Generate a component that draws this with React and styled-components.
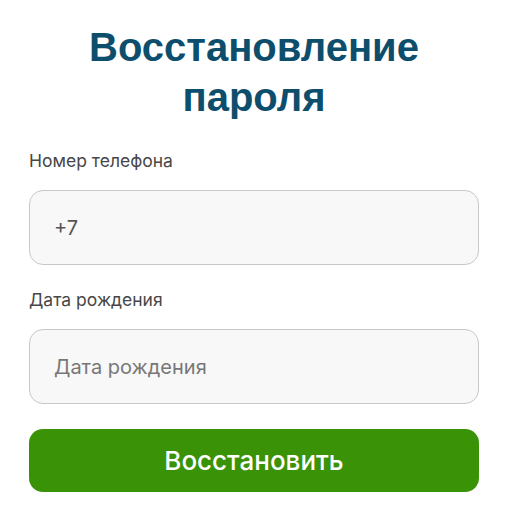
import React from 'react';
import styled, { createGlobalStyle } from 'styled-components';

const GlobalStyle = createGlobalStyle`
  body {
    margin: 0;
    background: #ffffff;
    font-family: Inter, "Noto Sans", sans-serif;
  }
`;

const Page = styled.div`
  padding: 22px 29px 0;
  display: flex;
  flex-direction: column;
`;

const Title = styled.h1`
  margin: 0 0 28px;
  font-family: "Liberation Sans", Arial, sans-serif;
  font-size: 40px;
  line-height: 50px;
  font-weight: 700;
  color: #0d4e6d;
  text-align: center;
`;

const Field = styled.label`
  display: flex;
  flex-direction: column;
  gap: 18px;
  margin-bottom: ${(p) => p.spacing}px;
`;

const Label = styled.span`
  font-size: 17.5px;
  line-height: 22px;
  color: #474747;
`;

const Input = styled.input`
  box-sizing: border-box;
  width: 100%;
  height: 75px;
  padding: 0 24px;
  border: 1px solid #c8c8c8;
  border-radius: 14px;
  background: #f8f8f8;
  font-family: Inter, "Noto Sans", sans-serif;
  font-size: 20px;
  color: #555;
  outline: none;

  &::placeholder {
    color: #777;
  }
`;

const Submit = styled.button`
  height: 63px;
  border: none;
  border-radius: 14px;
  background: #3a9207;
  color: #ffffff;
  font-family: Inter, "Noto Sans", sans-serif;
  font-size: 26px;
  font-weight: 500;
  cursor: pointer;
`;

export default function App() {
  return (
    <>
      <GlobalStyle />
      <Page>
        <Title>
          Восстановление
          <br />
          пароля
        </Title>
        <Field spacing={24}>
          <Label>Номер телефона</Label>
          <Input defaultValue="+7" />
        </Field>
        <Field spacing={25}>
          <Label>Дата рождения</Label>
          <Input placeholder="Дата рождения" />
        </Field>
        <Submit type="button">Восстановить</Submit>
      </Page>
    </>
  );
}
